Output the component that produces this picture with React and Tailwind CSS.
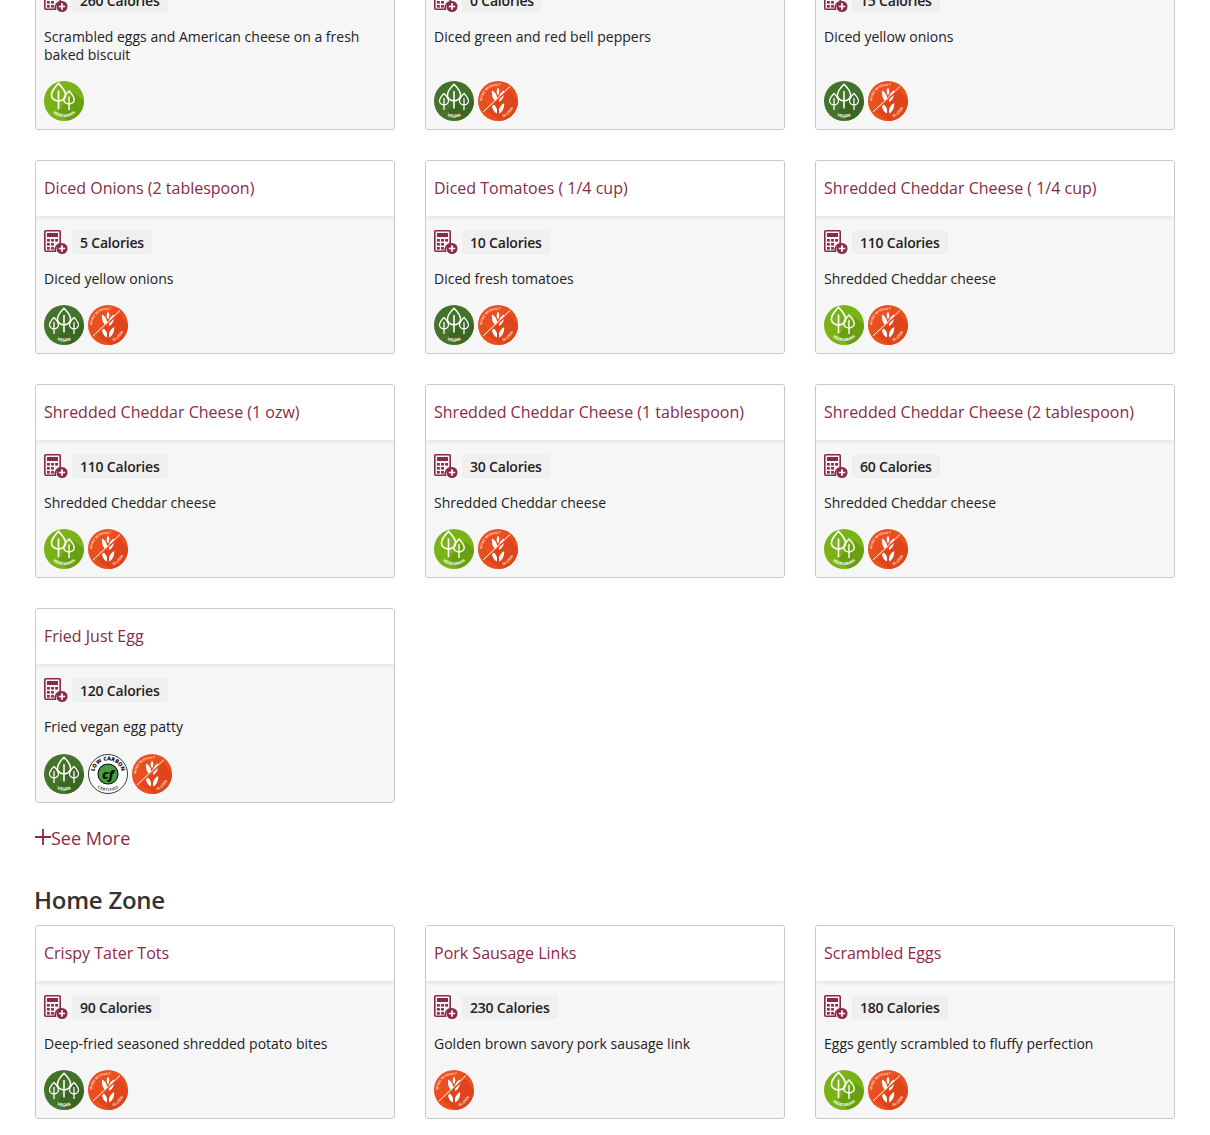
const CalcIcon = () => (
  <svg width="24" height="24" viewBox="0 0 24 24" className="shrink-0">
    <path d="M1.8 0.8h13.4a1 1 0 0 1 1 1v11.7a6.5 6.5 0 0 0-4.8 7.7h-9.6a1 1 0 0 1-1-1v-18.4a1 1 0 0 1 1-1z" fill="none" stroke="#8a2a44" strokeWidth="1.6" />
    <rect x="3" y="3" width="11" height="4" fill="#8a2a44" />
    <g fill="#8a2a44">
      <rect x="3" y="9" width="2.8" height="2.6" />
      <rect x="7.1" y="9" width="2.8" height="2.6" />
      <rect x="11.2" y="9" width="2.8" height="2.6" />
      <rect x="3" y="13" width="2.8" height="2.6" />
      <rect x="7.1" y="13" width="2.8" height="2.6" />
      <rect x="3" y="17" width="2.8" height="2.6" />
      <rect x="7.1" y="17" width="2.8" height="2.6" />
    </g>
    <circle cx="18" cy="18.5" r="5.5" fill="#8a2a44" />
    <path d="M18 15.3v6.4M14.8 18.5h6.4" stroke="#fff" strokeWidth="1.7" />
  </svg>
);

const Tree = ({ x, y, s, w = 1.4 }) => (
  <g transform={`translate(${x} ${y}) scale(${s})`} fill="none" stroke="#fff" strokeWidth={w}>
    <path d="M0 -9C-4 -5 -6 -2 -6 1C-6 4 -3 6 0 6C3 6 6 4 6 1C6 -2 4 -5 0 -9Z" />
    <path d="M0 -3V13" />
  </g>
);

const Circular = ({ id, text, r = 16.5, fill = "#fff", size = 4.2 }) => (
  <>
    <path id={id} d={`M${20 - r} 20a${r} ${r} 0 0 0 ${2 * r} 0`} fill="none" />
    <text fontFamily="'Open Sans', sans-serif" fontSize={size} fontWeight="700" fill={fill} textAnchor="middle">
      <textPath href={`#${id}`} startOffset="50%">{text}</textPath>
    </text>
  </>
);

let uid = 0;

const Vegan = () => {
  const id = `v${uid++}`;
  return (
    <svg width="40" height="40" viewBox="0 0 40 40" className="shrink-0">
      <circle cx="20" cy="20" r="20" fill="#44742a" />
      <path d="M32 12L40 20A20 20 0 0 1 24 39.5L14 30Z" fill="#3a6722" />
      <Tree x={20} y={13.2} s={1.1} />
      <Tree x={10} y={19.3} s={0.75} w={1.7} />
      <Tree x={30} y={19.3} s={0.75} w={1.7} />
      <Circular id={id} text="VEGAN" />
    </svg>
  );
};

const Vegetarian = () => {
  const id = `g${uid++}`;
  return (
    <svg width="40" height="40" viewBox="0 0 40 40" className="shrink-0">
      <circle cx="20" cy="20" r="20" fill="#7ab317" />
      <path d="M30 12L40 20A20 20 0 0 1 24 39.5L14 30Z" fill="#68a012" />
      <Tree x={14.5} y={13} s={1.18} />
      <Tree x={25} y={17.8} s={0.87} w={1.6} />
      <Circular id={id} text="VEGETARIAN" size={3.9} r={16.2} />
    </svg>
  );
};

const GlutenFree = () => {
  const a = `a${uid++}`;
  const b = `b${uid++}`;
  return (
    <svg width="40" height="40" viewBox="0 0 40 40" className="shrink-0">
      <circle cx="20" cy="20" r="20" fill="#ea4f20" />
      <path d="M31 8L40 20A20 20 0 0 1 22 40L8 30Z" fill="#de451a" />
      <g fill="#fff">
        <path d="M19 33V21C15.5 19.5 13.5 15.5 14 9.5C17 11 18.7 13.5 19 16.5Z" />
        <path d="M21 33V21C24.5 19.5 26.5 15.5 26 9.5C23 11 21.3 13.5 21 16.5Z" />
        <path d="M20 6.5C21.8 9 21.8 12 20 14.5C18.2 12 18.2 9 20 6.5Z" />
        <path d="M19 32.5C15.5 31 13.5 27 13.8 22C16.5 23.5 18.5 26 19 28.5Z" />
        <path d="M21 32.5C24.5 31 26.5 27 26.2 22C23.5 23.5 21.5 26 21 28.5Z" />
      </g>
      <path d="M6 31.5L32.5 6" stroke="#ea4f20" strokeWidth="2.4" />
      <path d="M5 31L32 5.5" stroke="#fff" strokeWidth="1" />
      <path id={a} d="M4 21a16 16 0 0 1 22-15" fill="none" />
      <text fontFamily="'Open Sans', sans-serif" fontSize="3.3" fontWeight="700" fill="#ffd9c9">
        <textPath href={`#${a}`} startOffset="4%">MADE WITHOUT</textPath>
      </text>
      <path id={b} d="M20 37a17 17 0 0 0 16-22" fill="none" />
      <text fontFamily="'Open Sans', sans-serif" fontSize="3.6" fontWeight="700" fill="#ffd9c9">
        <textPath href={`#${b}`} startOffset="16%">GLUTEN</textPath>
      </text>
    </svg>
  );
};

const LowCarbon = () => {
  const a = `c${uid++}`;
  const b = `d${uid++}`;
  return (
    <svg width="40" height="40" viewBox="0 0 40 40" className="shrink-0">
      <circle cx="20" cy="20" r="19.5" fill="#fff" stroke="#222" strokeWidth="0.9" />
      <circle cx="20" cy="20" r="10" fill="#45a03c" stroke="#111" strokeWidth="1.1" />
      <path id={a} d="M7.2 26a14 14 0 1 1 25.6 0" fill="none" />
      <text fontFamily="'Open Sans', sans-serif" fontSize="5.4" fontWeight="800" fill="#111" textAnchor="middle">
        <textPath href={`#${a}`} startOffset="50%">LOW CARBON</textPath>
      </text>
      <path id={b} d="M8 27.5a14 14 0 0 0 24 0" fill="none" />
      <text fontFamily="'Open Sans', sans-serif" fontSize="4" fontWeight="600" fill="#222" textAnchor="middle" dominantBaseline="hanging">
        <textPath href={`#${b}`} startOffset="50%">CERTIFIED</textPath>
      </text>
      <text x="20" y="24.5" fontFamily="'Open Sans', sans-serif" fontSize="13" fontWeight="800" fontStyle="italic" fill="#111" textAnchor="middle">cf</text>
    </svg>
  );
};

const BADGES = { V: Vegan, G: Vegetarian, F: GlutenFree, L: LowCarbon };

const Card = ({ title, cal, desc, badges }) => (
  <div className="flex flex-col rounded-[3px] border border-[#c9c9c9] bg-[#f6f6f6] overflow-hidden">
    <div className="relative flex h-[55px] items-center bg-white px-2 pb-[2px] text-[16px] text-[#8a2a44] shadow-[0_2px_4px_rgba(0,0,0,0.08)]">
      {title}
    </div>
    <div className="flex flex-1 flex-col px-2 pt-[14px] pb-2">
      <div className="flex h-[24px] items-center gap-1">
        <CalcIcon />
        <span className="flex h-[24px] items-center rounded-[3px] bg-[#efefef] px-2 text-[14px] font-semibold tracking-[-0.2px] text-[#222]">
          {cal} Calories
        </span>
      </div>
      <p className="mt-[16px] flex-1 text-[14px] leading-[18px] text-[#222]">{desc}</p>
      <div className={`mt-[17px] flex gap-1 ${badges.includes("L") ? "pt-px" : ""}`}>
        {badges.split("").map((b, i) => {
          const B = BADGES[b];
          return <B key={i} />;
        })}
      </div>
    </div>
  </div>
);

const GRID1 = [
  ["Bacon Egg Biscuit", "260", "Scrambled eggs and American cheese on a fresh baked biscuit", "G"],
  ["Diced Bell Peppers", "0", "Diced green and red bell peppers", "VF"],
  ["Diced Onions", "15", "Diced yellow onions", "VF"],
  ["Diced Onions (2 tablespoon)", "5", "Diced yellow onions", "VF"],
  ["Diced Tomatoes ( 1/4 cup)", "10", "Diced fresh tomatoes", "VF"],
  ["Shredded Cheddar Cheese ( 1/4 cup)", "110", "Shredded Cheddar cheese", "GF"],
  ["Shredded Cheddar Cheese (1 ozw)", "110", "Shredded Cheddar cheese", "GF"],
  ["Shredded Cheddar Cheese (1 tablespoon)", "30", "Shredded Cheddar cheese", "GF"],
  ["Shredded Cheddar Cheese (2 tablespoon)", "60", "Shredded Cheddar cheese", "GF"],
  ["Fried Just Egg", "120", "Fried vegan egg patty", "VLF"],
];

const GRID2 = [
  ["Crispy Tater Tots", "90", "Deep-fried seasoned shredded potato bites", "VF"],
  ["Pork Sausage Links", "230", "Golden brown savory pork sausage link", "F"],
  ["Scrambled Eggs", "180", "Eggs gently scrambled to fluffy perfection", "GF"],
];

export default function App() {
  return (
    <div className="h-[1135px] overflow-hidden bg-white font-['Open_Sans',sans-serif]">
      <div className="mt-[-82px] px-[35px]">
        <div className="grid grid-cols-3 gap-[30px]">
          {GRID1.map((c) => (
            <Card key={c[0]} title={c[0]} cal={c[1]} desc={c[2]} badges={c[3]} />
          ))}
        </div>
        <div className="mt-[22px] flex items-center text-[18px] leading-[26px] text-[#8a2a44]">
          <svg width="16" height="16" viewBox="0 0 16 16" className="mb-[2px] shrink-0">
            <path d="M8 0v16M0 8h16" stroke="#8a2a44" strokeWidth="1.8" />
          </svg>
          See More
        </div>
        <h2 className="ml-[-1px] mt-[32px] text-[24px] leading-[34px] font-semibold tracking-[-0.25px] text-[#333]">Home Zone</h2>
        <div className="mt-2 grid grid-cols-3 gap-[30px]">
          {GRID2.map((c) => (
            <Card key={c[0]} title={c[0]} cal={c[1]} desc={c[2]} badges={c[3]} />
          ))}
        </div>
      </div>
    </div>
  );
}
